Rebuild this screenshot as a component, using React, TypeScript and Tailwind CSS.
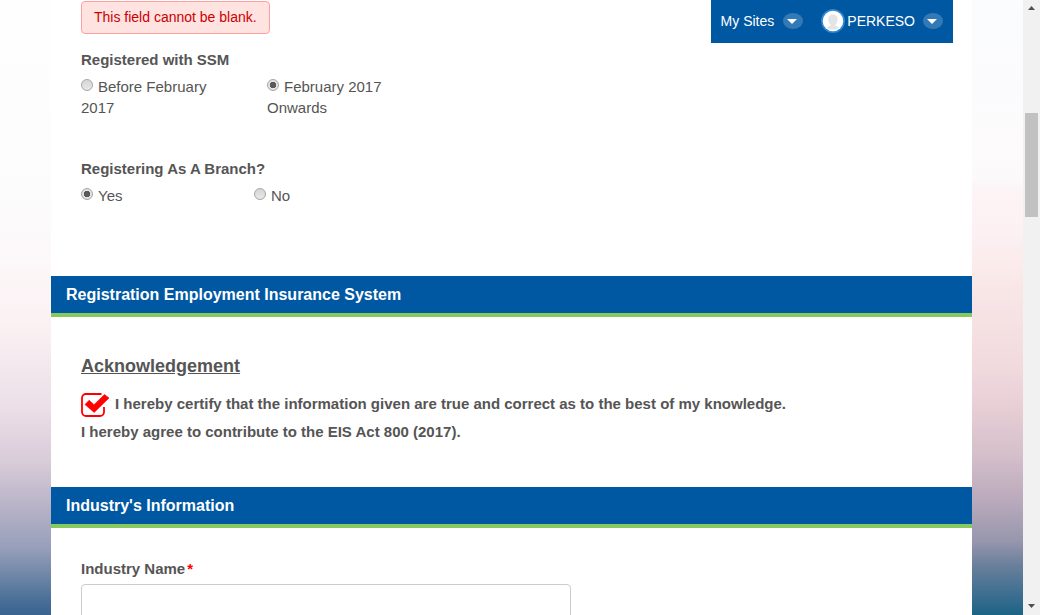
import type { ReactNode } from "react";

function SectionHeader({ children }: { children: ReactNode }) {
  return (
    <h2 className="border-b-4 border-[#87c95f] bg-[#0057a2] px-[15px] text-base leading-[37px] font-bold text-white">
      {children}
    </h2>
  );
}

function RadioOption({
  name,
  label,
  checked = false,
}: {
  name: string;
  label: string;
  checked?: boolean;
}) {
  return (
    <label className="block">
      <input
        type="radio"
        name={name}
        defaultChecked={checked}
        className="mr-[5px] mb-px inline-block size-3 appearance-none rounded-full border border-[#a8a8a8] bg-[#dddddd] bg-linear-to-b from-[#d6d6d6] to-[#e8e8e8] align-baseline checked:bg-[radial-gradient(circle,#5a5a5a_0_3px,#e2e2e2_3px)]"
      />
      {label}
    </label>
  );
}

function CaretPill() {
  return (
    <svg viewBox="0 0 20 16" className="h-4 w-5" aria-hidden="true">
      <ellipse cx="10" cy="8" rx="10" ry="8" fill="#3379b5" />
      <path d="M4 6h10l-5 5z" fill="#fff" />
    </svg>
  );
}

function Avatar() {
  return (
    <svg viewBox="0 0 24 24" className="size-6" aria-hidden="true">
      <circle cx="12" cy="12" r="12" fill="#2d86d0" />
      <circle cx="12" cy="12" r="10.3" fill="#fff" />
      <path
        d="M12 5.5c-3 0-4.7 2-4.7 5 0 2 .8 3.8 2.2 5v1.300c-1.300.5-2.800.9-3.800 1.700a10 10 0 0 0 12.600 0c-1-.8-2.500-1.200-3.800-1.700v-1.300c1.400-1.200 2.200-3 2.200-5 0-3-1.700-5-4.700-5z"
        fill="#e4e4e4"
      />
    </svg>
  );
}

function UserBar() {
  return (
    <nav className="absolute top-0 right-[19px] flex h-[43px] items-center bg-[#0057a2] px-[10px] pb-px text-sm text-white">
      <button type="button" className="flex items-center gap-[9px]">
        My Sites
        <CaretPill />
      </button>
      <button type="button" className="ml-[18px] flex items-center gap-2">
        <span className="flex items-center gap-[2px]">
          <Avatar />
          PERKESO
        </span>
        <CaretPill />
      </button>
    </nav>
  );
}

function ScrollTrack() {
  return (
    <div className="flex w-[17px] shrink-0 flex-col items-center bg-[#f1f1f1]" aria-hidden="true">
      <svg viewBox="0 0 17 17" className="size-[17px]">
        <path d="M5 10h7L8.500 6z" fill="#505050" />
      </svg>
      <div className="mt-24 h-[104px] w-[13px] bg-[#c1c1c1]" />
      <svg viewBox="0 0 17 17" className="mt-auto size-[17px]">
        <path d="M5 6h7l-3.500 4z" fill="#505050" />
      </svg>
    </div>
  );
}

export default function App() {
  return (
    <div className="flex h-screen overflow-hidden font-['Liberation_Sans',Arial,sans-serif] text-[15px] leading-[21px] text-[#555555]">
      <div className="flex min-w-0 flex-1">
        <div className="w-[51px] shrink-0 bg-[linear-gradient(to_bottom,#fefefe_0%,#fdfdfe_25%,#fcfafb_36%,#fdf9fa_40%,#fbf1f3_53%,#ecdfe8_66%,#d9ccd9_75%,#b9b4c8_82%,#989fbb_89%,#6b84a5_94%,#456d95_98%,#3b6390_100%)]" />
        <main className="relative min-w-0 flex-1 bg-white">
          <UserBar />
          <form>
            <div className="px-[30px] pt-px pb-[70px]">
              <p className="w-fit rounded border border-[#ff9f9f] bg-[#ffe3e1] px-3 py-[5px] text-sm leading-[21px] text-[#cc0000]">
                This field cannot be blank.
              </p>
              <fieldset className="mt-[15px]">
                <legend className="mb-[6px] font-bold">Registered with SSM</legend>
                <div className="flex gap-[46px]">
                  <div className="w-[140px]">
                    <RadioOption name="ssm" label="Before February 2017" />
                  </div>
                  <div className="w-[140px]">
                    <RadioOption name="ssm" label="February 2017 Onwards" checked />
                  </div>
                </div>
              </fieldset>
              <fieldset className="mt-10">
                <legend className="mb-[6px] font-bold">Registering As A Branch?</legend>
                <div className="flex gap-[33px]">
                  <div className="w-[140px]">
                    <RadioOption name="branch" label="Yes" checked />
                  </div>
                  <div className="w-[140px]">
                    <RadioOption name="branch" label="No" />
                  </div>
                </div>
              </fieldset>
            </div>

            <SectionHeader>Registration Employment Insurance System</SectionHeader>
            <div className="px-[30px] pt-[37px] pb-[41px] font-bold">
              <h3 className="text-lg leading-6 underline">Acknowledgement</h3>
              <label className="mt-3 flex items-center gap-[6px] leading-7">
                <span className="grid h-7 w-7 shrink-0">
                  <input
                    type="checkbox"
                    defaultChecked
                    className="col-start-1 row-start-1 size-7 appearance-none"
                  />
                  <svg
                    viewBox="0 0 28 28"
                    className="pointer-events-none col-start-1 row-start-1 size-7"
                    aria-hidden="true"
                  >
                    <path
                      d="M20.500 4H5a4 4 0 0 0-4 4V22a4 4 0 0 0 4 4h14a4 4 0 0 0 4-4v-5"
                      fill="none"
                      stroke="#fe0000"
                      strokeWidth="1.800"
                    />
                    <path
                      d="M4 14.500l4.200-4.300 4.800 4.500L23.500 4.500l4.500 3.500L13.200 22.500z"
                      fill="#fe0000"
                      stroke="#fe0000"
                      strokeWidth="0.600"
                    />
                  </svg>
                </span>
                <span>
                  I hereby certify that the information given are true and correct as to the best of
                  my knowledge.
                </span>
              </label>
              <p className="leading-7">I hereby agree to contribute to the EIS Act 800 (2017).</p>
            </div>

            <SectionHeader>Industry&apos;s Information</SectionHeader>
            <div className="px-[30px] pt-[30px]">
              <label htmlFor="industry-name" className="mb-[5px] block font-bold">
                Industry Name<span className="ml-[2px] text-[#ff0000]">*</span>
              </label>
              <input
                id="industry-name"
                type="text"
                className="block h-11 w-full max-w-[490px] rounded border border-[#cccccc] bg-white px-3"
              />
            </div>
          </form>
        </main>
        <div className="w-[51px] shrink-0 bg-[linear-gradient(to_bottom,#fbfcfe_0%,#fbfbfd_15%,#fdfbfb_24%,#fbf9fa_29%,#fdf4f6_31%,#fcf0f3_38%,#fbebeb_43%,#f6e1e3_52%,#f0dade_60%,#e8cfd6_66%,#d4bfca_74%,#bcabbd_81%,#9796ad_88%,#697f9b_92%,#3a6d8f_97%,#1c6384_100%)]" />
      </div>
      <ScrollTrack />
    </div>
  );
}
